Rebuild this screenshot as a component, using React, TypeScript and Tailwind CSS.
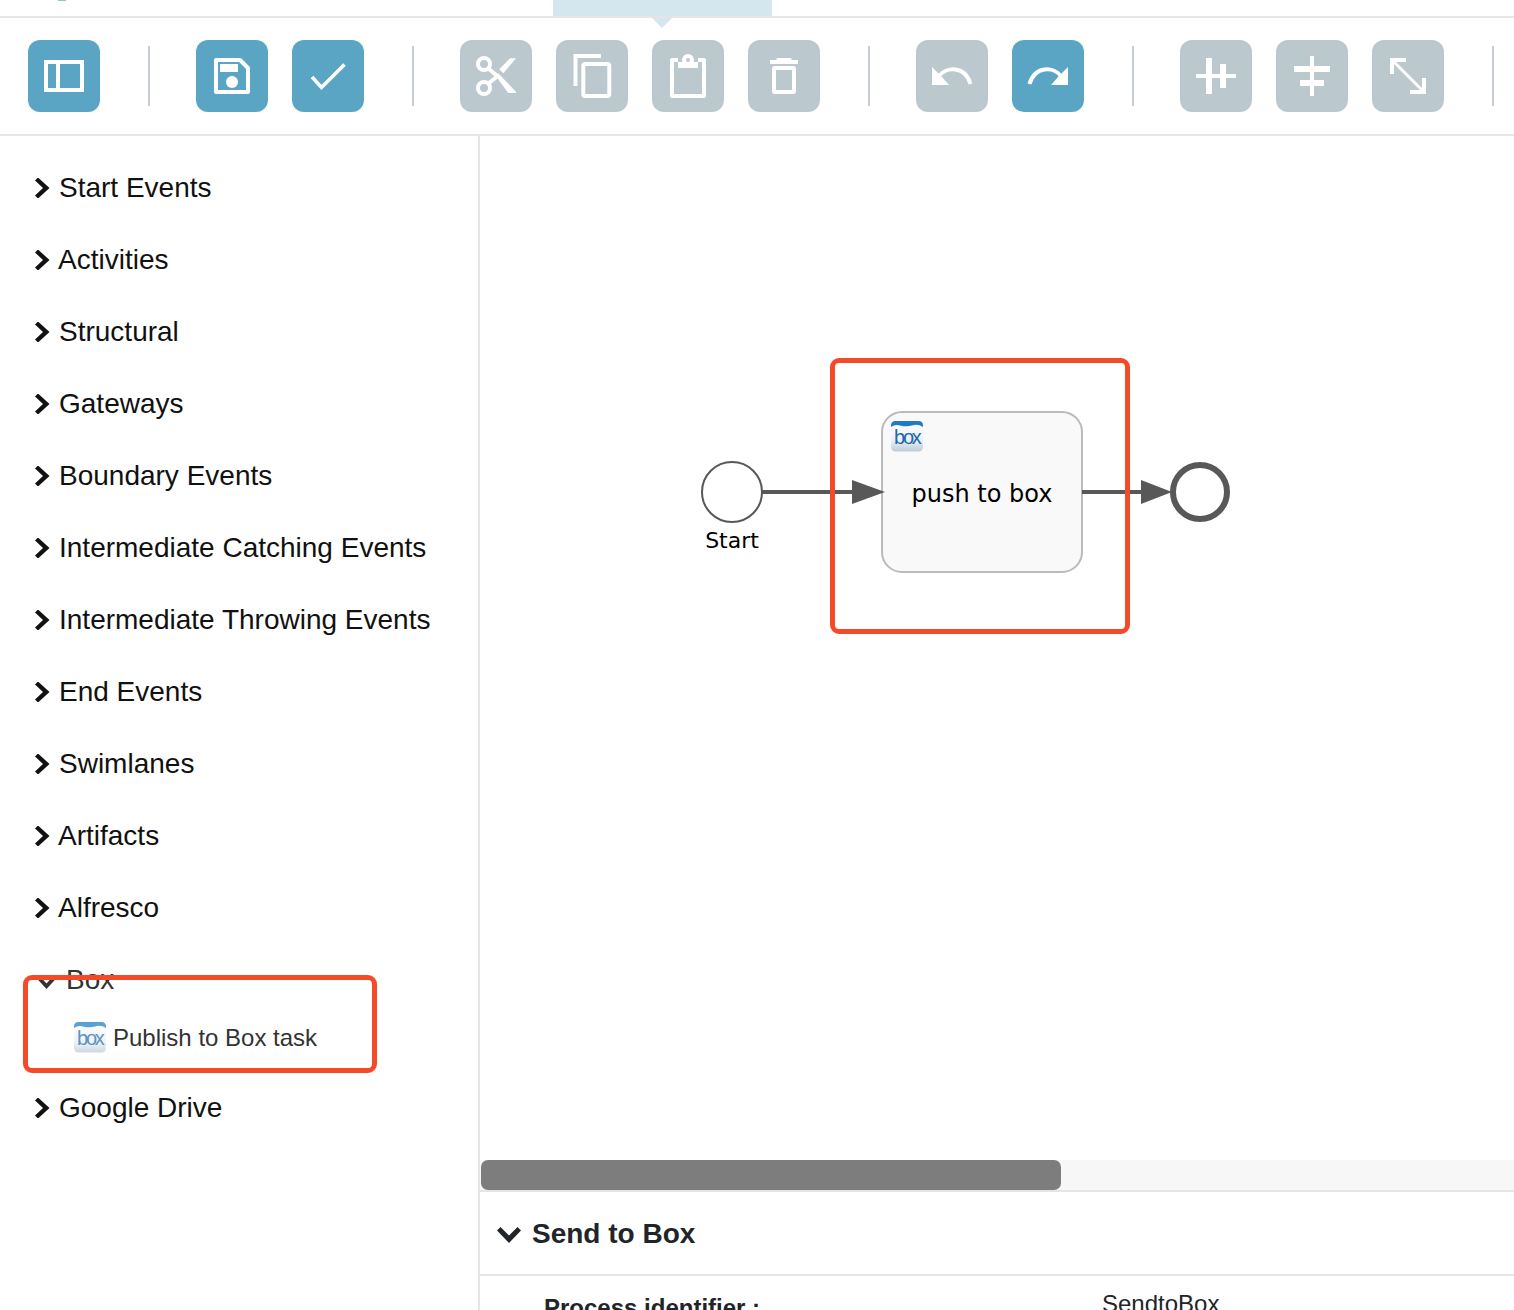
import React from "react";

const Btn = ({ on, children }: { on?: boolean; children: React.ReactNode }) => (
  <div className={on ? "w-[72px] h-[72px] rounded-[12px] bg-[#5ba5c4]" : "w-[72px] h-[72px] rounded-[12px] bg-[#bbc9cf]"}>
    <svg width="72" height="72" viewBox="0 0 72 72" fill="none" stroke="#fff" strokeWidth="4">
      {children}
    </svg>
  </div>
);

const Sep = () => <div className="w-[2px] h-[60px] bg-[#c5ccd3] ml-[48px] mr-[46px] shrink-0" />;

const Chevron = () => (
  <svg width="16" height="20" viewBox="0 0 16 20" className="shrink-0">
    <path d="M4 -0.5 L15.5 10 L4 20.5 L1 17.5 L9 10 L1 2.5 Z" fill="#111" />
  </svg>
);

const ChevronDown = ({ color = "#212529", w = 24, h = 16, cls = "shrink-0 mt-[4px]" }: { color?: string; w?: number; h?: number; cls?: string }) => (
  <svg width={w} height={h} viewBox="0 0 24 16" preserveAspectRatio="none" className={cls}>
    <path d="M0 3.5 L3.5 0 L12 8.5 L20.5 0 L24 3.5 L12 16 Z" fill={color} />
  </svg>
);

const BoxIcon = ({ id, x, y, size = 32, faded }: { id: string; x?: number; y?: number; size?: number; faded?: boolean }) => (
  <svg x={x} y={y} width={size} height={size} viewBox="0 0 32 32" opacity={faded ? 0.72 : 1}>
    <defs>
      <linearGradient id={id} x1="0" y1="0" x2="0" y2="1">
        <stop offset="0" stopColor="#ffffff" />
        <stop offset="0.65" stopColor="#e8f0f6" />
        <stop offset="1" stopColor="#bccbd6" />
      </linearGradient>
    </defs>
    <rect x="0" y="0" width="32" height="30.5" rx="4.5" fill={`url(#${id})`} />
    <path d="M0 6 V4.5 Q0 0 4.5 0 H27.5 Q32 0 32 4.5 V6 Q27 2.6 21 4.6 Q15 6.2 9 4.4 Q4 3 0 6 Z" fill="#1f7cc2" />
    <text x="3" y="22.5" fontSize="20" letterSpacing="-2.2" fill="#2468a8" className="[font-family:'Liberation_Sans',sans-serif]">box</text>
  </svg>
);

const rowsTop = ["Start Events", "Activities", "Structural", "Gateways", "Boundary Events", "Intermediate Catching Events", "Intermediate Throwing Events", "End Events", "Swimlanes", "Artifacts", "Alfresco"];

const Row = ({ label }: { label: string }) => (
  <div className="h-[72px] flex items-center pl-[34px] gap-[9px] text-[28px] text-[#111]">
    <Chevron />
    <span className={label[0] === "A" ? "-ml-[1px]" : ""}>{label}</span>
  </div>
);

export default function App() {
  return (
    <div className="w-[1514px] h-[1310px] overflow-hidden bg-white flex flex-col relative [font-family:'Liberation_Sans',Arial,sans-serif]">
      <div className="h-[18px] shrink-0 border-b-2 border-[#e5e5e5] flex">
        <div className="w-[8px] h-[1px] ml-[58px] bg-[#8fc7a8]" />
        <div className="w-[219px] h-[16px] ml-[487px] bg-[#d5e7ee]" />
      </div>
      <div className="absolute left-[652px] top-[18px] w-0 h-0 border-l-[10px] border-r-[10px] border-t-[10px] border-l-transparent border-r-transparent border-t-[#d5e7ee]" />

      <div className="h-[118px] shrink-0 border-b-2 border-[#e5e5e5] flex items-center pl-[28px]">
        <Btn on>
          <rect x="18" y="22" width="36" height="28" />
          <path d="M30 22 V50" />
        </Btn>
        <Sep />
        <div className="flex gap-[24px]">
          <Btn on>
            <path d="M20 20 H44 L52 28 V52 H20 Z" strokeLinejoin="round" />
            <rect x="24" y="24" width="18" height="8" fill="#fff" stroke="none" />
            <circle cx="36" cy="42" r="6" fill="#fff" stroke="none" />
          </Btn>
          <Btn on>
            <path d="M20 37 L29.5 47.5 L52.5 24.5" strokeWidth="3.6" />
          </Btn>
        </div>
        <Sep />
        <div className="flex gap-[24px]">
          <Btn>
            <circle cx="24" cy="24" r="6" />
            <circle cx="24" cy="48" r="6" />
            <path d="M28.5 28.5 L36 35" />
            <path d="M29 43 L36.5 37" />
            <path d="M35 35 L38.3 33.3 L56 51.7 V53 H48.3 Z" fill="#fff" stroke="none" />
            <path d="M50 18.3 H56 L43.3 33.3 L39.3 29.3 Z" fill="#fff" stroke="none" />
          </Btn>
          <Btn>
            <path d="M19.5 46 V16 H45" />
            <rect x="27.3" y="24" width="26" height="32" rx="2" />
          </Btn>
          <Btn>
            <path d="M26 20 H20 V56 H52 V20 H46" strokeLinejoin="round" />
            <rect x="26" y="22" width="20" height="6" fill="#fff" stroke="none" />
            <circle cx="36" cy="20" r="4" fill="#bbc9cf" strokeWidth="4" />
          </Btn>
          <Btn>
            <rect x="22" y="20" width="28" height="4" fill="#fff" stroke="none" />
            <rect x="28.5" y="18" width="15" height="3" rx="1" fill="#fff" stroke="none" />
            <rect x="26" y="28" width="20" height="24" rx="1" />
          </Btn>
        </div>
        <Sep />
        <div className="flex gap-[24px]">
          <Btn>
            <path d="M16 27 V45 H33 L26 37 Z" fill="#fff" stroke="none" />
            <path d="M23 36 C30 27 49 25 54.5 44" strokeWidth="4" />
          </Btn>
          <Btn on>
            <path d="M56 27 V45 H39 L46 37 Z" fill="#fff" stroke="none" />
            <path d="M49 36 C42 27 23 25 17.5 44" strokeWidth="4" />
          </Btn>
        </div>
        <Sep />
        <div className="flex gap-[24px]">
          <Btn>
            <g fill="#fff" stroke="none">
              <rect x="26" y="18" width="6" height="36" />
              <rect x="40" y="24" width="6" height="24" />
              <rect x="16" y="34" width="40" height="4" />
            </g>
          </Btn>
          <Btn>
            <g fill="#fff" stroke="none">
              <rect x="34" y="16" width="4" height="40" />
              <rect x="18" y="26" width="36" height="6" />
              <rect x="24" y="40" width="24" height="6" />
            </g>
          </Btn>
          <Btn>
            <path d="M20 34 V20 H34" />
            <path d="M52 38 V52 H38" />
            <path d="M21 21 L51 51" strokeWidth="3" />
          </Btn>
        </div>
        <Sep />
      </div>

      <div className="flex flex-1 min-h-0">
        <div className="w-[480px] shrink-0 border-r-2 border-[#e5e5e5] pt-[16px] relative">
          {rowsTop.map((r) => (
            <Row key={r} label={r} />
          ))}
          <div className="h-[72px] flex items-center pl-[38px] gap-[11px] text-[28px] text-[#333]">
            <ChevronDown color="#333" w={17} h={12} cls="shrink-0 mt-[6px]" />
            <span>Box</span>
          </div>
          <div className="h-[56px] pb-[12px] flex items-center pl-[74px] gap-[7px] text-[24px] text-[#333]">
            <svg width="32" height="32" className="shrink-0">
              <BoxIcon id="boxItem" faded />
            </svg>
            <span>Publish to Box task</span>
          </div>
          <Row label="Google Drive" />
          <div className="absolute left-[23px] top-[839px] w-[354px] h-[98px] border-[5px] border-[#f44a27] rounded-[9px]" />
        </div>

        <div className="flex-1 min-w-0 flex flex-col">
          <div className="h-[1024px] shrink-0 relative">
            <svg width="1034" height="1024" viewBox="480 136 1034 1024" className="block">
              <circle cx="732" cy="492" r="30" fill="#fff" stroke="#585858" strokeWidth="2" />
              <rect x="882" y="412" width="200" height="160" rx="20" fill="#f9f9f9" stroke="#bbb" strokeWidth="2" />
              <path d="M762 492 H856" stroke="#585858" strokeWidth="4" />
              <path d="M852 480 L885 492 L852 504 Z" fill="#585858" />
              <BoxIcon id="boxTask" x={891} y={421} />
              <path d="M1082 492 H1145" stroke="#585858" strokeWidth="4" />
              <path d="M1141 480 L1172 492 L1141 504 Z" fill="#585858" />
              <circle cx="1200" cy="492" r="27" fill="#fff" stroke="#585858" strokeWidth="6" />
              <text x="982" y="502" textAnchor="middle" fontSize="24" fill="#000" className="[font-family:'DejaVu_Sans',sans-serif]">push to box</text>
              <text x="732" y="548" textAnchor="middle" fontSize="22" fill="#000" className="[font-family:'DejaVu_Sans',sans-serif]">Start</text>
            </svg>
            <div className="absolute left-[350px] top-[222px] w-[300px] h-[276px] border-[5px] border-[#f44a27] rounded-[9px]" />
          </div>
          <div className="h-[30px] shrink-0 bg-[#f7f7f7] pl-[1px]">
            <div className="w-[580px] h-full bg-[#7d7d7d] rounded-[7px]" />
          </div>
          <div className="h-[86px] shrink-0 border-t-2 border-b-2 border-[#e5e5e5] flex items-center pl-[17px] gap-[11px] text-[28px] font-bold text-[#212529]">
            <ChevronDown />
            <span className="mt-[2px]">Send to Box</span>
          </div>
          <div className="flex pl-[64px] text-[24px] text-[#212529] leading-[28px]">
            <div className="w-[558px] font-bold pt-[18px] shrink-0">Process identifier :</div>
            <div className="pt-[14px]">SendtoBox</div>
          </div>
        </div>
      </div>
    </div>
  );
}
